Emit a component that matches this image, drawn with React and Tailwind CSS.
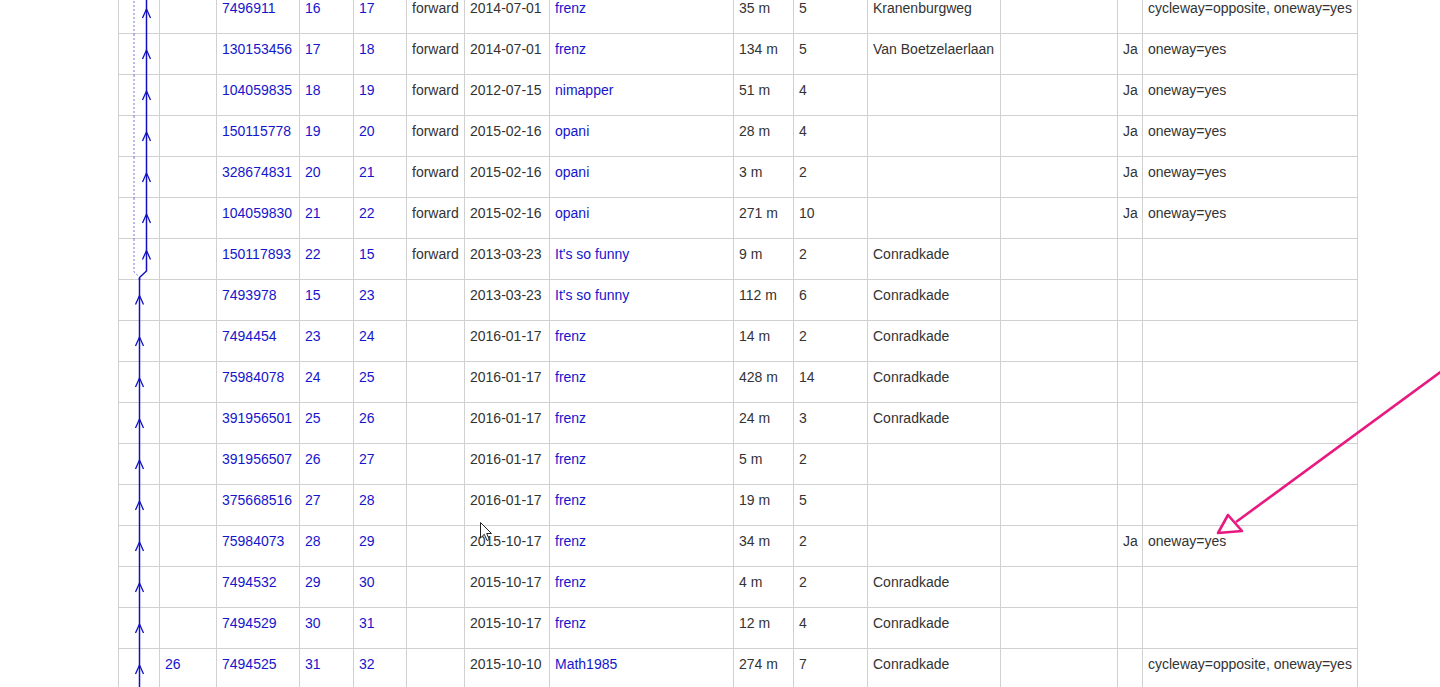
import React from "react";

const COLS = "grid-cols-[41px_57px_83px_54px_53px_58px_85px_184px_60px_74px_133px_117px_25px_215px]";

const rows = [
  { id: "7496911", from: "16", to: "17", role: "forward", date: "2014-07-01", user: "frenz", len: "35 m", nodes: "5", name: "Kranenburgweg", ja: "", tags: "cycleway=opposite, oneway=yes", graph: "up2" },
  { id: "130153456", from: "17", to: "18", role: "forward", date: "2014-07-01", user: "frenz", len: "134 m", nodes: "5", name: "Van Boetzelaerlaan", ja: "Ja", tags: "oneway=yes", graph: "up2" },
  { id: "104059835", from: "18", to: "19", role: "forward", date: "2012-07-15", user: "nimapper", len: "51 m", nodes: "4", name: "", ja: "Ja", tags: "oneway=yes", graph: "up2" },
  { id: "150115778", from: "19", to: "20", role: "forward", date: "2015-02-16", user: "opani", len: "28 m", nodes: "4", name: "", ja: "Ja", tags: "oneway=yes", graph: "up2" },
  { id: "328674831", from: "20", to: "21", role: "forward", date: "2015-02-16", user: "opani", len: "3 m", nodes: "2", name: "", ja: "Ja", tags: "oneway=yes", graph: "up2" },
  { id: "104059830", from: "21", to: "22", role: "forward", date: "2015-02-16", user: "opani", len: "271 m", nodes: "10", name: "", ja: "Ja", tags: "oneway=yes", graph: "up2" },
  { id: "150117893", from: "22", to: "15", role: "forward", date: "2013-03-23", user: "It's so funny", len: "9 m", nodes: "2", name: "Conradkade", ja: "", tags: "", graph: "join" },
  { id: "7493978", from: "15", to: "23", role: "", date: "2013-03-23", user: "It's so funny", len: "112 m", nodes: "6", name: "Conradkade", ja: "", tags: "", graph: "first" },
  { id: "7494454", from: "23", to: "24", role: "", date: "2016-01-17", user: "frenz", len: "14 m", nodes: "2", name: "Conradkade", ja: "", tags: "", graph: "up1" },
  { id: "75984078", from: "24", to: "25", role: "", date: "2016-01-17", user: "frenz", len: "428 m", nodes: "14", name: "Conradkade", ja: "", tags: "", graph: "up1" },
  { id: "391956501", from: "25", to: "26", role: "", date: "2016-01-17", user: "frenz", len: "24 m", nodes: "3", name: "Conradkade", ja: "", tags: "", graph: "up1" },
  { id: "391956507", from: "26", to: "27", role: "", date: "2016-01-17", user: "frenz", len: "5 m", nodes: "2", name: "", ja: "", tags: "", graph: "up1" },
  { id: "375668516", from: "27", to: "28", role: "", date: "2016-01-17", user: "frenz", len: "19 m", nodes: "5", name: "", ja: "", tags: "", graph: "up1" },
  { id: "75984073", from: "28", to: "29", role: "", date: "2015-10-17", user: "frenz", len: "34 m", nodes: "2", name: "", ja: "Ja", tags: "oneway=yes", graph: "up1" },
  { id: "7494532", from: "29", to: "30", role: "", date: "2015-10-17", user: "frenz", len: "4 m", nodes: "2", name: "Conradkade", ja: "", tags: "", graph: "up1" },
  { id: "7494529", from: "30", to: "31", role: "", date: "2015-10-17", user: "frenz", len: "12 m", nodes: "4", name: "Conradkade", ja: "", tags: "", graph: "up1" },
  { id: "7494525", from: "31", to: "32", role: "", date: "2015-10-10", user: "Math1985", len: "274 m", nodes: "7", name: "Conradkade", ja: "", tags: "cycleway=opposite, oneway=yes", graph: "up1", num: "26" },
];

const BLUE = "#1010c0";

function Chevron({ x, mid }) {
  const tip = mid - 4.5;
  return (
    <path d={`M${x - 4} ${tip + 9} L${x} ${tip} L${x + 4} ${tip + 9}`} fill="none" stroke={BLUE} strokeWidth="1.3" />
  );
}

function Graph({ kind }) {
  return (
    <svg className="absolute left-0 top-0 w-[40px] h-[41px] overflow-visible" viewBox="0 0 40 41">
      {kind === "up2" && (
        <>
          <line x1="15" y1="0" x2="15" y2="41" stroke="#7777d8" strokeWidth="1" strokeDasharray="2 2" />
          <line x1="27.5" y1="0" x2="27.5" y2="41" stroke={BLUE} strokeWidth="1.5" />
          <Chevron x={27.5} mid={20.5} />
        </>
      )}
      {kind === "join" && (
        <>
          <polyline points="15,0 15,33 20.5,38" fill="none" stroke="#7777d8" strokeWidth="1" strokeDasharray="2 2" />
          <polyline points="27.5,0 27.5,32 20.5,38.5 20.5,41" fill="none" stroke={BLUE} strokeWidth="1.5" />
          <Chevron x={27.5} mid={16} />
        </>
      )}
      {kind === "first" && (
        <>
          <line x1="20.5" y1="-2" x2="20.5" y2="41" stroke={BLUE} strokeWidth="1.5" />
          <Chevron x={20.5} mid={20} />
        </>
      )}
      {kind === "up1" && (
        <>
          <line x1="20.5" y1="0" x2="20.5" y2="41" stroke={BLUE} strokeWidth="1.5" />
          <Chevron x={20.5} mid={20.5} />
        </>
      )}
    </svg>
  );
}

function Cell({ children, link }) {
  return (
    <div className={`border-r border-[#d0d0d0] px-[5px] pt-[7px] whitespace-nowrap overflow-hidden ${link ? "text-[#1515cc]" : "text-[#333]"}`}>
      {children}
    </div>
  );
}

export default function App() {
  return (
    <div className="relative w-[1440px] h-[687px] overflow-hidden bg-white font-['Liberation_Sans',Arial,sans-serif] text-[14px] leading-[16px]">
      <div className="ml-[118px] mt-[-7px] w-[1240px] border-l border-[#d0d0d0]">
        {rows.map((r) => (
          <div key={r.id} className={`grid ${COLS} h-[41px] border-b border-[#d0d0d0]`}>
            <div className="relative border-r border-[#d0d0d0]">
              <Graph kind={r.graph} />
            </div>
            <Cell link>{r.num || ""}</Cell>
            <Cell link>{r.id}</Cell>
            <Cell link>{r.from}</Cell>
            <Cell link>{r.to}</Cell>
            <Cell>{r.role}</Cell>
            <Cell>{r.date}</Cell>
            <Cell link>{r.user}</Cell>
            <Cell>{r.len}</Cell>
            <Cell>{r.nodes}</Cell>
            <Cell>{r.name}</Cell>
            <Cell></Cell>
            <Cell>{r.ja}</Cell>
            <Cell>{r.tags}</Cell>
          </div>
        ))}
      </div>

      {/* annotation arrow */}
      <svg className="absolute left-0 top-0 w-[1440px] h-[687px] pointer-events-none" viewBox="0 0 1440 687">
        <line x1="1446" y1="368" x2="1236" y2="522" stroke="#e8197f" strokeWidth="2.6" />
        <polygon points="1228,515 1218,533 1242,531" fill="white" stroke="#e8197f" strokeWidth="2.6" strokeLinejoin="round" />
      </svg>

      {/* mouse cursor */}
      <svg className="absolute left-[480px] top-[522px] w-[13px] h-[20px]" viewBox="0 0 13 20">
        <path d="M0.5 0.5 L0.5 16 L4.3 12.3 L7 18.5 L9.3 17.5 L6.7 11.5 L11.5 11.5 Z" fill="white" stroke="#222" strokeWidth="1" strokeLinejoin="round" />
      </svg>
    </div>
  );
}
